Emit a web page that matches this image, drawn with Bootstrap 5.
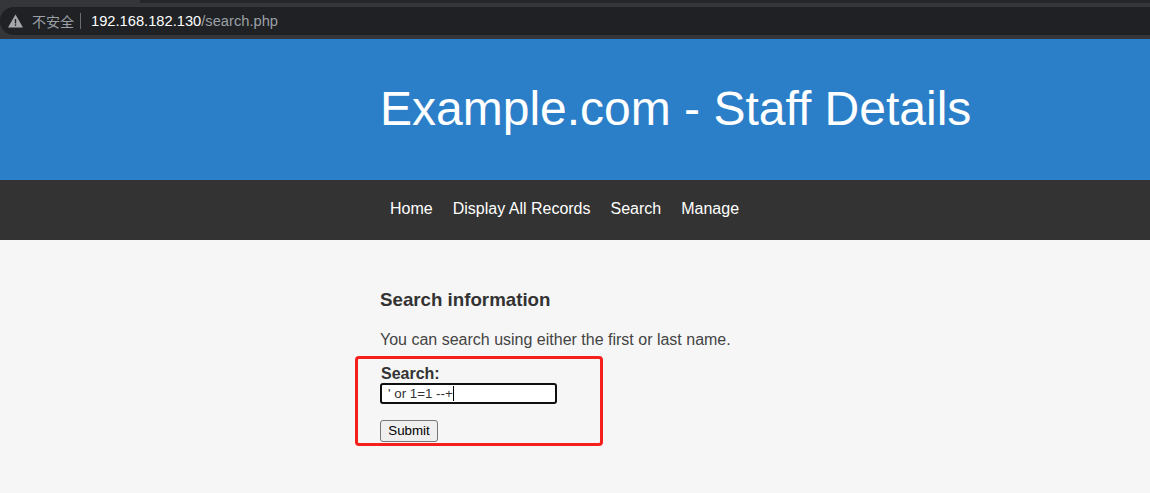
<!DOCTYPE html>
<html lang="en">
<head>
    <meta charset="UTF-8">
    <meta name="viewport" content="width=device-width, initial-scale=1">
    <title>Example.com - Staff Details</title>
    <link href="https://cdn.jsdelivr.net/npm/bootstrap@5.3.0/dist/css/bootstrap.min.css" rel="stylesheet">
    <style>
        html, body { height: 100%; }
        body { background: #f6f6f6; font-family: "Liberation Sans", Arial, sans-serif; color: #333; overflow: hidden; }
        .browser-bar { height: 39px; background: #35363a; }
        .tab-strip { height: 3px; margin-left: 140px; margin-bottom: 4px; background: #25262a; }
        .url-pill { height: 28px; background: #202124; border-radius: 14px 0 0 14px; padding-left: 8px; color: #9aa0a6; font-size: 14.7px; }
        .warn-label { font-family: "Noto Sans CJK SC", sans-serif; font-size: 14px; margin-left: 9px; }
        .url-sep { width: 1px; height: 16px; background: #6b6e72; margin: 0 10px 0 6px; }
        .url-host { color: #fff; }
        .site-head { height: 141px; background: #2b7fc9; color: #fff; }
        .site-head h1 { font-size: 48px; font-weight: 400; line-height: 1; margin: 0; padding-top: 46px; padding-left: 380px; }
        .site-nav { height: 60px; background: #333; padding-left: 380px; padding-bottom: 2px; }
        .site-nav a { color: #fff; text-decoration: none; font-size: 16px; padding: 0 10px; }
        .page-main { padding: 49px 0 0 380px; }
        .page-main h2 { font-size: 18.72px; font-weight: 700; line-height: 21px; margin: 0 0 21px; color: #333; }
        .page-main p { font-size: 16px; line-height: 18px; margin: 0 0 16px; color: #444; }
        .search-label { display: block; font-size: 16px; font-weight: 700; line-height: 18px; margin: 0 0 0 1px; color: #333; }
        .input-wrap { position: relative; width: 177px; }
        .search-input { display: block; width: 177px; height: 21px; border: 2px solid #101010; border-radius: 3px; background: #fff; font-size: 13.33px; font-family: "Liberation Sans", Arial, sans-serif; padding: 0 6px; color: #333; outline: 0; }
        .fake-caret { position: absolute; left: 73px; top: 3px; width: 1px; height: 15px; background: #000; }
        .search-btn { display: block; margin-top: 16px; height: 22px; width: 58px; padding: 0; font-size: 13.33px; font-family: "Liberation Sans", Arial, sans-serif; color: #000; background: #efefef; border: 1px solid #767676; border-radius: 3px; }
        .red-mark { position: absolute; left: 355px; top: 356px; width: 248px; height: 90px; border: 3px solid #f5201c; border-radius: 4px; pointer-events: none; }
    </style>
</head>
<body>
    <!-- Barra del navegador -->
    <div class="browser-bar">
        <div class="tab-strip"></div>
        <div class="url-pill d-flex align-items-center">
            <svg width="15" height="14" viewBox="0 0 15 14"><path fill="#a4a8ad" d="M7.5 .5 15 13.5H0Z"/><rect x="6.8" y="5" width="1.4" height="4.5" fill="#202124"/><rect x="6.8" y="10.3" width="1.4" height="1.5" fill="#202124"/></svg>
            <span class="warn-label">不安全</span>
            <span class="url-sep"></span>
            <span><span class="url-host">192.168.182.130</span>/search.php</span>
        </div>
    </div>

    <header class="site-head"><h1>Example.com - Staff Details</h1></header>

    <nav class="site-nav d-flex align-items-center">
        <a href="#">Home</a>
        <a href="#">Display All Records</a>
        <a href="#">Search</a>
        <a href="#">Manage</a>
    </nav>

    <main class="page-main">
        <h2>Search information</h2>
        <p>You can search using either the first or last name.</p>
        <form>
            <label class="search-label" for="q">Search:</label>
            <div class="input-wrap">
                <input class="search-input" id="q" type="text" value="' or 1=1 --+">
                <span class="fake-caret"></span>
            </div>
            <button class="search-btn" type="button">Submit</button>
        </form>
    </main>

    <div class="red-mark"></div>

    <script src="https://cdn.jsdelivr.net/npm/bootstrap@5.3.0/dist/js/bootstrap.bundle.min.js"></script>
</body>
</html>
